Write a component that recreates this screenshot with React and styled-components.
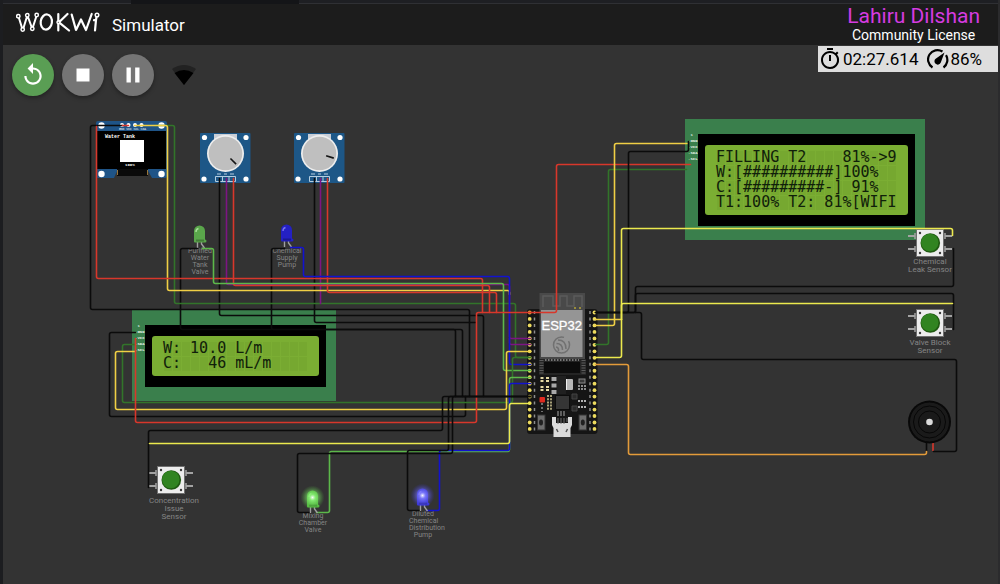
import styled, { createGlobalStyle, css } from "styled-components";
import { MdReplay, MdStop, MdPause, MdOutlineTimer } from "react-icons/md";

const GlobalStyle = createGlobalStyle`
  * {
    box-sizing: border-box;
  }
  body {
    margin: 0;
    background: #333333;
    color: #ffffff;
    font-family: Roboto, "Noto Sans", sans-serif;
  }
`;

const Page = styled.div`
  position: relative;
  min-height: 100vh;
  border-left: 3px solid #1c1d20;
  border-right: 2px solid #2b2b2d;
  overflow: hidden;
`;

const TabStrip = styled.div`
  display: flex;
  gap: 168px;
  height: 4px;
  background: #141518;
`;

const Tab = styled.div`
  flex: ${({ $wide }) => ($wide ? "1" : "0 0 128px")};
  background: #1e1f23;
  border-bottom: 1px solid #2f3034;
`;

const Header = styled.header`
  display: flex;
  align-items: center;
  justify-content: space-between;
  height: 41px;
  padding: 0 18px 0 13px;
  background: #1c1c1c;
`;

const Brand = styled.div`
  display: flex;
  align-items: center;
  gap: 12px;
  > svg {
    margin-bottom: 6px;
  }
`;

const Title = styled.h1`
  margin: 0;
  font-weight: 400;
  font-size: 17px;
  line-height: 24px;
`;

const License = styled.div`
  text-align: center;
  line-height: 18px;
  font-size: 14px;
`;

const Owner = styled.div`
  font-size: 21px;
  line-height: 20px;
  color: #d63be0;
`;

const Toolbar = styled.div`
  display: flex;
  align-items: flex-start;
  justify-content: space-between;
`;

const Controls = styled.div`
  display: flex;
  align-items: center;
  gap: 8px;
  padding: 9px;
`;

const RoundButton = styled.button`
  display: flex;
  align-items: center;
  justify-content: center;
  width: 42px;
  height: 42px;
  padding: 0;
  border: 0;
  border-radius: 50%;
  background: ${({ $primary }) => ($primary ? "#5a9e54" : "#757575")};
  color: #ffffff;
  font-size: 26px;
  box-shadow: 0 2px 4px rgba(0, 0, 0, 0.35);
  cursor: pointer;
`;

const WifiIcon = styled.svg`
  margin-left: 10px;
`;

const Stats = styled.div`
  display: flex;
  align-items: center;
  width: 180px;
  height: 26px;
  margin-top: 1px;
  background: #dedede;
  color: #000000;
  font-size: 17px;
  line-height: 26px;
`;

const Stat = styled.div`
  display: flex;
  align-items: center;
  gap: 1px;
  margin-right: 9px;
  svg {
    font-size: 24px;
  }
`;

// The diagram is a free canvas: every part is pinned by its own coordinates.
const Diagram = styled.main`
  position: absolute;
  top: 0;
  left: -3px;
  width: 1000px;
  height: 584px;
  pointer-events: none;
`;

const pinned = css`
  position: absolute;
  left: ${({ $x }) => $x}px;
  top: ${({ $y }) => $y}px;
`;

const Part = styled.svg`
  ${pinned}
  overflow: visible;
`;

const Label = styled.div`
  ${pinned}
  width: ${({ $width = 60 }) => $width}px;
  text-align: center;
  white-space: pre-line;
  color: #858585;
  font-size: ${({ $large }) => ($large ? 8 : 7)}px;
  line-height: ${({ $large }) => ($large ? 8 : 7)}px;
`;

const LcdBoard = styled.div`
  ${pinned}
  padding: 15px 10px 14px 13px;
  background: #3a7f4c;
`;

const LcdBezel = styled.div`
  position: relative;
  padding: 11px 7px;
  background: #000000;
`;

const LcdScreen = styled.div`
  padding: 5px 12px 5px 11px;
  border-radius: 3px;
  background: #7bae33;
`;

const LcdText = styled.pre`
  margin: 0;
  width: ${({ $cols }) => $cols * 9}px;
  color: #10200a;
  font-family: "DejaVu Sans Mono", monospace;
  font-size: 15px;
  line-height: 15px;
  background-image: linear-gradient(#7bae33 1px, transparent 1px),
    linear-gradient(90deg, #7bae33 1px, #76a830 1px);
  background-size: 9px 15px;
`;

const PinNames = styled.div`
  position: absolute;
  left: 3px;
  top: 13px;
  color: #e3efe6;
  font-family: "Liberation Mono", monospace;
  font-weight: 700;
  font-size: 4px;
  line-height: 6px;
  white-space: pre;
`;

const colors = {
  black: "#0b0b0b",
  red: "#d8372b",
  blue: "#1212cf",
  green: "#5cb84a",
  dark: "#32742a",
  gold: "#f0cf45",
  yellow: "#ece94e",
  purple: "#7d1583",
  orange: "#e39b3a",
};

// [colour, x1, y1, x2, y2, ...]
const wires = [
  ["black", 122, 125, 90, 125, 90, 309, 469, 309, 469, 396],
  ["black", 219, 178, 219, 315, 483, 315, 483, 396],
  ["black", 314, 178, 314, 322, 475, 322],
  ["black", 197, 248, 180, 248, 180, 329, 462, 329, 462, 396],
  ["black", 284, 248, 271, 248, 271, 329, 455, 329, 455, 396],
  ["dark", 154, 125, 174, 125, 174, 303, 515, 303, 515, 357, 530, 357],
  ["purple", 226, 178, 226, 284, 509, 284, 509, 338, 530, 338],
  ["purple", 320, 178, 320, 303],
  ["purple", 509, 338, 509, 344, 530, 344],
  ["gold", 134, 125, 167, 125, 167, 290, 509, 290, 509, 294],
  ["red", 128, 125, 122, 125],
  ["red", 96, 126, 96, 278, 482, 278, 482, 312],
  ["red", 233, 178, 233, 285, 489, 285, 489, 312],
  ["red", 327, 178, 327, 292, 496, 292, 496, 312],
  ["green", 202, 248, 213, 248, 213, 283, 503, 283, 503, 370, 530, 370],
  ["blue", 290, 247, 303, 247, 303, 276, 509, 276, 509, 364, 530, 364],
  ["black", 135, 332, 109, 332, 109, 416, 465, 416, 465, 396],
  ["dark", 135, 344, 122, 344, 122, 402, 512, 402, 512, 357, 530, 357],
  ["gold", 135, 351, 115, 351, 115, 409, 506, 409, 506, 351, 530, 351],
  ["red", 690, 164, 556, 164, 556, 312, 476, 312, 476, 422, 135, 422, 135, 338],
  ["black", 530, 396, 442, 396, 442, 430, 148, 430, 148, 487],
  ["green", 316, 512, 329, 512, 329, 451, 509, 451, 509, 377, 530, 377],
  ["blue", 426, 510, 439, 510, 439, 450, 509, 450, 509, 383, 530, 383],
  ["black", 530, 396, 448, 396, 448, 450, 407, 450, 407, 510, 420, 510],
  ["black", 530, 396, 452, 396, 452, 453, 297, 453, 297, 512, 310, 512],
  ["yellow", 530, 403, 509, 403, 509, 443, 149, 443],
  ["dark", 595, 344, 608, 344, 608, 169, 686, 169],
  ["gold", 595, 325, 614, 325, 614, 143, 687, 143],
  ["black", 595, 312, 628, 312, 628, 151, 688, 151, 688, 141],
  ["black", 595, 312, 635, 312, 635, 286, 953, 286, 953, 248],
  ["black", 635, 312, 635, 293, 953, 293, 953, 329],
  ["black", 595, 312, 641, 312, 641, 359, 956, 359, 956, 451, 933, 451],
  ["gold", 595, 319, 621, 319],
  ["yellow", 621, 319, 621, 303, 952, 303],
  ["yellow", 595, 357, 621, 357, 621, 228, 952, 228, 952, 235],
  ["orange", 595, 364, 628, 364, 628, 454, 926, 454, 926, 451],
];

function wirePath(points) {
  const r = 2;
  const p = [];
  for (let i = 0; i < points.length; i += 2) p.push([points[i], points[i + 1]]);
  let d = `M${p[0]}`;
  for (let i = 1; i < p.length - 1; i++) {
    const [x, y] = p[i];
    const before = p[i - 1];
    const after = p[i + 1];
    const ax = x - Math.sign(x - before[0]) * r;
    const ay = y - Math.sign(y - before[1]) * r;
    const bx = x + Math.sign(after[0] - x) * r;
    const by = y + Math.sign(after[1] - y) * r;
    d += `L${ax},${ay}Q${x},${y} ${bx},${by}`;
  }
  return `${d}L${p[p.length - 1]}`;
}

function Wires() {
  return (
    <Part $x={0} $y={0} width="1000" height="584" fill="none">
      <g transform="translate(0.500 0.500)" strokeWidth="1.600" strokeLinecap="round">
        {wires.map(([color, ...points], i) => (
          <path key={i} d={wirePath(points)} stroke={colors[color]} />
        ))}
      </g>
    </Part>
  );
}

function Logo() {
  return (
    <svg width="84" height="20" viewBox="0 0 84 20" fill="none" stroke="#fff" strokeWidth="2.200" strokeLinecap="round" strokeLinejoin="round" role="img" aria-label="Wokwi">
      <path d="M2.800 5.500 6.200 16.500M7.300 16.500 11 4.500M11.800 4.500 15.800 15.500M16.800 15.500 20.300 4.500" strokeWidth="2" />
      <ellipse cx="30.300" cy="10" rx="5.600" ry="7.600" transform="rotate(8 30.300 10)" />
      <path d="M42.300 2V18.500M51.500 2 43 10.300 53 18.500" />
      <path d="M55.700 2.500 60 18 65 7.500 70 18 75.700 2" />
      <path d="M78 8.200 80 7.800 79 18.500M80.500 5l-.5 3" />
      <g fill="#1c1c1c" strokeWidth="1.500">
        <circle cx="2.300" cy="4.300" r="1.700" />
        <circle cx="11.300" cy="3.300" r="1.700" />
        <circle cx="20.700" cy="3" r="1.700" />
        <circle cx="6.700" cy="17.500" r="1.700" />
        <circle cx="16.300" cy="16.700" r="1.700" />
        <circle cx="42.300" cy="10.300" r="1.300" />
        <circle cx="81" cy="3" r="1.800" />
      </g>
    </svg>
  );
}

function GaugeIcon() {
  return (
    <svg width="22" height="24" viewBox="0 0 22 24" fill="none" stroke="#000" strokeWidth="2.200" aria-hidden="true">
      <path d="M5.500 20.500A9.200 9.200 0 0 1 15.500 4.500" />
      <path d="M19 8.200A9.200 9.200 0 0 1 16.500 20.500" />
      <path d="M17.500 5.500 9 11.500A3.300 3.300 0 1 0 13.800 15.500Z" fill="#000" stroke="none" />
    </svg>
  );
}

function Lcd({ x, y, cols, text }) {
  return (
    <LcdBoard $x={x} $y={y}>
      <PinNames>{" 1\n.GND\n.VCC\n.SDA\n.SCL"}</PinNames>
      <LcdBezel>
        <LcdScreen>
          <LcdText $cols={cols}>{text}</LcdText>
        </LcdScreen>
      </LcdBezel>
    </LcdBoard>
  );
}

function Oled() {
  return (
    <Part $x={96} $y={121} width="71" height="58">
      <rect width="71" height="57" rx="2" fill="#1f5487" />
      <path d="M18 57 22 48H51L56 57Z" fill="#333333" />
      <rect x="1" y="10" width="69" height="38" fill="#000" />
      <path d="M21 48h31v7H21z" fill="#0a0a0a" />
      <path d="M21.500 49v5M51.500 49v5" stroke="#96753c" />
      <g fill="#fff">
        <circle cx="5.500" cy="4.500" r="3.200" />
        <circle cx="65.500" cy="4.500" r="3.200" />
        <circle cx="5.500" cy="53" r="3.200" />
        <circle cx="65.500" cy="53" r="3.200" />
        <circle cx="26" cy="4" r="2" />
        <circle cx="32.500" cy="4" r="2" />
        <circle cx="39" cy="4" r="2" />
        <circle cx="45.500" cy="4" r="2" />
        <rect x="24" y="19" width="24" height="22" />
        <text x="9" y="17" fontFamily="Liberation Mono" fontSize="5" fontWeight="700">Water Tank</text>
        <text x="29" y="45" fontFamily="Liberation Mono" fontSize="4" fontWeight="700">100%</text>
        <text x="23" y="9" fontFamily="Liberation Mono" fontSize="3">GND VCC SCL SDA</text>
      </g>
    </Part>
  );
}

function Potentiometer({ x, y, angle }) {
  return (
    <Part $x={x} $y={y} width="51" height="50">
      <rect width="50.500" height="50" rx="1" fill="#1d5787" />
      <rect x="14" y="1" width="23" height="10" fill="#c9ced6" />
      <circle cx="25.500" cy="20.500" r="18.500" fill="#eeeeee" />
      <circle cx="25.500" cy="20.500" r="16.800" fill="#bfbfbf" />
      <path d="M32.500 20.500h8" stroke="#151515" strokeWidth="1.600" transform={`rotate(${angle} 25.500 20.500)`} />
      <g fill="#fff">
        <circle cx="4.500" cy="4.500" r="2.600" />
        <circle cx="46" cy="4.500" r="2.600" />
        <circle cx="4" cy="46" r="2.600" />
        <circle cx="46" cy="46" r="2.600" />
      </g>
      <path d="M15.500 43.500h20v5h-20zM22.500 43.500v5M29 43.500v5M17 41h4M24 41h3M30 41h4" fill="none" stroke="#b3cde0" strokeWidth="1" />
    </Part>
  );
}

function Led({ x, y, color, shine, glow }) {
  return (
    <Part $x={x} $y={y} width="14" height="25">
      <path d="M4.500 17v6M8.500 17v2l3 4" fill="none" stroke="#a0a0a0" strokeWidth="1.400" />
      <path d="M1 6a5.500 5.500 0 0 1 11 0v8.500a1.500 1.500 0 0 1 0 3H2a1 1 0 0 1-1-1Z" fill={color} />
      <path d="M3 7a3.500 3.500 0 0 1 2.500-3.500" fill="none" stroke={shine} strokeWidth="1.400" />
      <path d="M3 15.500h8" stroke="#000" strokeOpacity="0.25" strokeWidth="2" />
      {glow && (
        <>
          <radialGradient id={`glow${x}`}>
            <stop offset="0" stopColor="#fff" stopOpacity="0.95" />
            <stop offset="0.250" stopColor={shine} stopOpacity="0.850" />
            <stop offset="1" stopColor={color} stopOpacity="0" />
          </radialGradient>
          <circle cx="6.500" cy="7.500" r="12" fill={`url(#glow${x})`} />
        </>
      )}
    </Part>
  );
}

function PushButton({ x, y }) {
  return (
    <Part $x={x} $y={y} width="46" height="28">
      <path d="M1 7h7M1 20h7M38 7h7M38 20h7" stroke="#a3a3a3" strokeWidth="2" />
      <path d="M8 4v6M8 17v6M38 4v6M38 17v6" stroke="#a3a3a3" strokeWidth="1.500" />
      <rect x="9" y="0" width="28" height="28" fill="#707070" />
      <rect x="10" y="1" width="26" height="26" fill="#ededed" />
      <g fill="#3a3a3a">
        <circle cx="13" cy="4" r="1.200" />
        <circle cx="33" cy="4" r="1.200" />
        <circle cx="13" cy="24" r="1.200" />
        <circle cx="33" cy="24" r="1.200" />
      </g>
      <circle cx="23.300" cy="14" r="9.800" fill="#205a12" />
      <circle cx="22.800" cy="13.500" r="8.700" fill="#318421" />
    </Part>
  );
}

function Buzzer() {
  return (
    <Part $x={908} $y={400} width="44" height="52">
      <path d="M18.500 40v11" stroke="#0b0b0b" strokeWidth="1.600" />
      <path d="M25 40v11" stroke="#d8372b" strokeWidth="1.600" />
      <circle cx="21.500" cy="22" r="21.500" fill="#090909" />
      <g fill="#1a1a1a" stroke="#070707" strokeWidth="1">
        <circle cx="21.500" cy="22" r="20" />
        <circle cx="21.500" cy="22" r="16" />
        <circle cx="21.500" cy="22" r="11" />
      </g>
      <circle cx="21.500" cy="22" r="3.300" fill="#dcdcdc" />
    </Part>
  );
}

function Esp32() {
  const pins = Array.from({ length: 19 }, (_, i) => 19.5 + i * 6.47);
  return (
    <Part $x={527} $y={293} width="71" height="148">
      <rect y="16" width="70.500" height="125" rx="3" fill="#151515" />
      <rect x="12.500" y="0" width="45.500" height="82" fill="#494949" />
      <path d="M16 14V3h10v10h7V3h7v10h7V3h8v11" fill="none" stroke="#5b5b5b" strokeWidth="1.500" />
      <path d="M48 14v2M53 14v2" stroke="#b2a337" strokeWidth="1.500" />
      <rect x="14" y="17" width="41.500" height="47" fill="#959595" />
      <text x="14.500" y="37" fill="#fff" stroke="#fff" strokeWidth="0.300" fontFamily="Liberation Sans" fontSize="13">ESP32</text>
      <g fill="none" stroke="#717171" strokeWidth="1.500">
        <circle cx="34.500" cy="52" r="8" strokeDasharray="40 6" />
        <path d="M31 47q8 0 8 9M29.500 50.500q6 0 6 6.500M29 54q3 .5 2.500 4" />
      </g>
      <rect x="12" y="66" width="47" height="16" fill="#242424" />
      <rect x="17" y="69" width="36" height="11" fill="#0c0c0c" />
      <path d="M18 67h34" stroke="#777" strokeWidth="2" strokeDasharray="1.500 1.500" />
      <path d="M14.500 67v15M56.500 67v15" stroke="#5c5c5c" strokeWidth="4" strokeDasharray="1 1.500" />
      {pins.map((y, i) => (
        <g key={y}>
          <circle cx="2.700" cy={y} r="1.900" fill={i === 0 ? "#e29a38" : "#eddb5f"} />
          <circle cx="67.500" cy={y} r="1.900" fill="#eddb5f" />
          <path d={`M7.500 ${y - 1.5}v3M63 ${y - 1.5}v3`} stroke="#8d8d8d" strokeWidth="1.500" />
        </g>
      ))}
      <g>
        <path d="M15 84v16M20.500 84v16" stroke="#e3d8a4" strokeWidth="3" strokeDasharray="2 1 2 4" />
        <path d="M27 84v18" stroke="#a8a8a8" strokeWidth="5" strokeDasharray="4 2.500" />
        <rect x="30" y="83" width="9" height="18" fill="#202020" />
        <rect x="39" y="86" width="7" height="11" rx="1" fill="#b5b5b5" />
        <path d="M39.500 86v11" stroke="#eeeeee" />
        <rect x="52" y="86" width="6" height="4" fill="#3a3a3a" stroke="#8a8a8a" />
        <path d="M52 92v5M55 92v5M58 92v5" stroke="#b5b5b5" strokeWidth="1.500" strokeDasharray="2 1" />
        <rect x="12.500" y="104" width="5.500" height="5.500" rx="1" fill="#e02a20" />
        <path d="M15 110v9" stroke="#707070" strokeWidth="2" strokeDasharray="2 2" />
        <path d="M21 102v15M24 102v15" stroke="#d9cf9b" strokeWidth="1.500" strokeDasharray="2 1.200" />
        <rect x="28.500" y="102.500" width="14" height="14" fill="#353535" stroke="#0c0c0c" />
        <path d="M45 101h5v5h-5zM45 113h5v5h-5z" fill="#2b2b2b" stroke="#454545" />
        <path d="M51 108h8M51 114h8" stroke="#b2b2b2" strokeWidth="2" strokeDasharray="2 1" />
        <path d="M31 118v5M34 118v5M37 118v5" stroke="#848484" strokeWidth="1.300" />
        <rect x="10.500" y="122" width="7.500" height="15" fill="#6d6d6d" stroke="#343434" />
        <rect x="52" y="122" width="7.500" height="15" fill="#6d6d6d" stroke="#343434" />
        <ellipse cx="14" cy="129.500" rx="2" ry="3" fill="#202020" />
        <ellipse cx="55.800" cy="129.500" rx="2" ry="3" fill="#202020" />
        <path d="M25 124h4v6h12v-6h4v8l-1.500 3v9h-17v-9l-1.500-3z" fill="#dbdbdb" />
        <path d="M31 125v6M34 125v6M37 125v6M40 125v4" stroke="#6f6f6f" />
        <path d="M29.500 136l1.500 3M40.500 136l-1.500 3" stroke="#555" strokeWidth="1.500" />
      </g>
    </Part>
  );
}

const bigText = `FILLING T2    81%->9
W:[##########]100%
C:[#########-] 91%
T1:100% T2: 81%[WIFI`;

const smallText = `W: 10.0 L/m
C:   46 mL/m`;

export default function App() {
  return (
    <Page>
      <GlobalStyle />
      <TabStrip>
        <Tab />
        <Tab $wide />
      </TabStrip>
      <Header>
        <Brand>
          <Logo />
          <Title>Simulator</Title>
        </Brand>
        <License>
          <Owner>Lahiru Dilshan</Owner>
          Community License
        </License>
      </Header>
      <Toolbar>
        <Controls>
          <RoundButton $primary aria-label="Restart"><MdReplay /></RoundButton>
          <RoundButton aria-label="Stop"><MdStop /></RoundButton>
          <RoundButton aria-label="Pause"><MdPause /></RoundButton>
          <WifiIcon width="24" height="20" viewBox="0 0 24 20" aria-hidden="true">
            <path d="M0 4Q12-4 24 4L12 20Z" fill="#222222" />
            <path d="M2.500 8Q12 2 21.500 8L12 20Z" fill="#000" />
          </WifiIcon>
        </Controls>
        <Stats>
          <Stat><MdOutlineTimer />02:27.614</Stat>
          <Stat><GaugeIcon />86%</Stat>
        </Stats>
      </Toolbar>
      <Diagram>
        <Oled />
        <Potentiometer x={200} y={133} angle={45} />
        <Potentiometer x={294} y={133} angle={18} />
        <Lcd x={685} y={119} cols={20} text={bigText} />
        <Lcd x={132} y={310} cols={16} text={smallText} />
        <Esp32 />
        <Buzzer />
        <PushButton x={907} y={229} />
        <PushButton x={907} y={309} />
        <PushButton x={148} y={466} />
        <Led x={193} y={225} color="#5aa64b" shine="#a6dd98" />
        <Led x={280} y={224} color="#2420c4" shine="#7672f0" />
        <Label $x={170} $y={248}>{"Purified\nWater\nTank\nValve"}</Label>
        <Label $x={257} $y={248}>{"Chemical\nSupply\nPump"}</Label>
        <Label $x={900} $y={258} $large>{"Chemical\nLeak Sensor"}</Label>
        <Label $x={900} $y={339} $large>{"Valve Block\nSensor"}</Label>
        <Label $x={144} $y={497} $large>{"Concentration\nIssue\nSensor"}</Label>
        <Label $x={283} $y={513}>{"Mixing\nChamber\nValve"}</Label>
        <Label $x={409} $y={511} $width={28}>{"Diluted\nChemical\nDistribution\nPump"}</Label>
        <Wires />
        <Led x={306} y={490} color="#52b83f" shine="#8df27b" glow />
        <Led x={416} y={488} color="#3a36d8" shine="#8583ff" glow />
      </Diagram>
    </Page>
  );
}
